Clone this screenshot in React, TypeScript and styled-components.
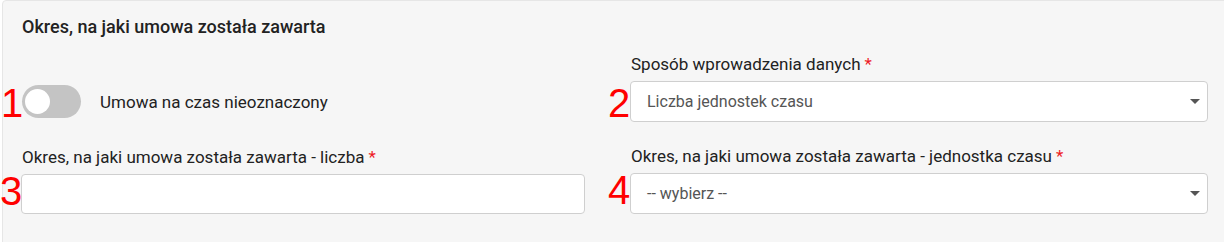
import React from "react";
import styled, { createGlobalStyle } from "styled-components";

const GlobalStyle = createGlobalStyle`
  html, body {
    margin: 0;
    padding: 0;
    background: #ffffff;
    overflow: hidden;
    font-family: Roboto, "Noto Sans", Arial, sans-serif;
  }
`;

const Page = styled.div`
  padding-left: 2px;
  width: 1234px;
`;

const Panel = styled.section`
  background: #f6f6f6;
  border: 1px solid #e6e6e6;
  border-radius: 4px;
  padding: 15px 26px 40px 18px;
  height: 300px;
  box-sizing: border-box;
`;

const Title = styled.h3`
  margin: 0 0 17px 0;
  padding-left: 1px;
  font-size: 18px;
  font-weight: 500;
  color: #222;
  line-height: 21px;
`;

const Grid = styled.div`
  display: grid;
  grid-template-columns: 564px 578px;
  column-gap: 45px;
  row-gap: 24px;
  align-items: end;
`;

const Field = styled.div`
  position: relative;
  display: flex;
  flex-direction: column;
  gap: 7px;
`;

const Label = styled.label`
  font-size: 17px;
  color: #222;
  line-height: 20px;
  padding-left: 1px;
`;

const Required = styled.span`
  color: #ee1c25;
  margin-left: 4px;
`;

const Marker = styled.span<{ $left: number; $bottom: number }>`
  position: absolute;
  left: ${(p) => p.$left}px;
  bottom: ${(p) => p.$bottom}px;
  font-family: "Liberation Sans", Arial, sans-serif;
  font-size: 40px;
  line-height: 44px;
  color: #ff0000;
  pointer-events: none;
`;

const TextInput = styled.input`
  box-sizing: border-box;
  height: 40px;
  width: 100%;
  border: 1px solid #cfcfcf;
  border-radius: 4px;
  background: #fff;
  padding: 0 15px;
  font-family: inherit;
  font-size: 16px;
`;

const SelectBox = styled.div`
  box-sizing: border-box;
  height: 41px;
  width: 100%;
  border: 1px solid #cfcfcf;
  border-radius: 4px;
  background: #fff;
  padding: 0 7px 0 16px;
  display: flex;
  align-items: center;
  justify-content: space-between;
  font-size: 16px;
  color: #555;
`;

const Caret = styled.span`
  width: 0;
  height: 0;
  border-left: 5px solid transparent;
  border-right: 5px solid transparent;
  border-top: 5px solid #555;
`;

const ToggleRow = styled.div`
  position: relative;
  display: flex;
  align-items: center;
  gap: 19px;
  height: 41px;
  padding-left: 1px;
`;

const Track = styled.span`
  position: relative;
  width: 59px;
  height: 33px;
  border-radius: 17px;
  background: #c4c4c4;
  flex-shrink: 0;
`;

const Knob = styled.span`
  position: absolute;
  left: 3px;
  top: 4px;
  width: 25px;
  height: 25px;
  border-radius: 50%;
  background: #fff;
`;

const ToggleText = styled.span`
  font-size: 17px;
  color: #222;
`;

const Select = ({ value }: { value: string }) => (
  <SelectBox>
    <span>{value}</span>
    <Caret />
  </SelectBox>
);

export default function App() {
  return (
    <Page>
      <GlobalStyle />
      <Panel>
        <Title>Okres, na jaki umowa została zawarta</Title>
        <Grid>
          <ToggleRow>
            <Marker $left={-20} $bottom={-3}>1</Marker>
            <Track>
              <Knob />
            </Track>
            <ToggleText>Umowa na czas nieoznaczony</ToggleText>
          </ToggleRow>
          <Field>
            <Label>
              Sposób wprowadzenia danych<Required>*</Required>
            </Label>
            <Marker $left={-22} $bottom={-3}>2</Marker>
            <Select value="Liczba jednostek czasu" />
          </Field>
          <Field>
            <Label>
              Okres, na jaki umowa została zawarta - liczba<Required>*</Required>
            </Label>
            <Marker $left={-21} $bottom={1}>3</Marker>
            <TextInput />
          </Field>
          <Field>
            <Label>
              Okres, na jaki umowa została zawarta - jednostka czasu<Required>*</Required>
            </Label>
            <Marker $left={-22} $bottom={2}>4</Marker>
            <Select value="-- wybierz --" />
          </Field>
        </Grid>
      </Panel>
    </Page>
  );
}
